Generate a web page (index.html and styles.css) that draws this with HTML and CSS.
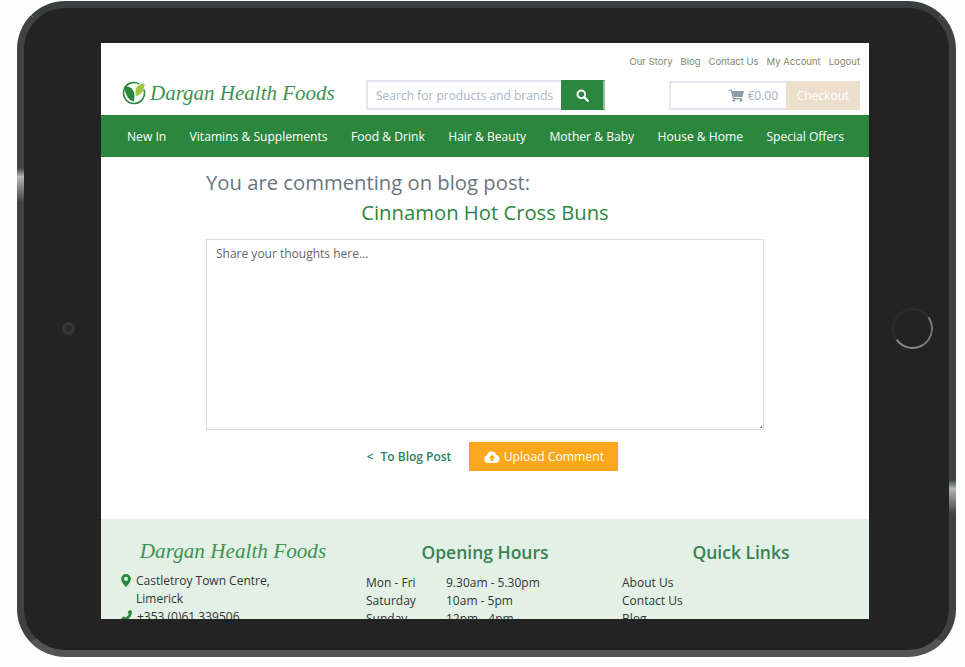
FILE: index.html
```html
<!DOCTYPE html>
<html lang="en">
<head>
  <meta charset="UTF-8">
  <meta name="viewport" content="width=device-width, initial-scale=1.0">
  <title>Dargan Health Foods</title>
  <link rel="stylesheet" href="styles.css">
</head>
<body>

  <div class="tablet">
    <span class="side-glint side-glint-left"></span>
    <span class="side-glint side-glint-right"></span>
    <span class="camera"></span>
    <span class="home-button"></span>

    <div class="screen">
      <header class="site-header">
        <nav class="top-links">
          <a>Our Story</a>
          <a>Blog</a>
          <a>Contact Us</a>
          <a>My Account</a>
          <a>Logout</a>
        </nav>
        <div class="header-row">
          <div class="logo">
            <svg class="logo-icon" viewBox="0 0 24 24" width="24" height="24">
              <path d="M17.250 2.900A10.500 10.500 0 1 0 21.870 8.400" fill="none" stroke="#2b873d" stroke-width="1.600"/>
              <path d="M2.500 5c6 0 10 3.500 10 10 0 2-.3 4-.5 5.500C6 19.500 2.500 12 2.500 5z" fill="#2b873d"/>
              <path d="M22.500 2.500c-5 .5-9.500 2.500-9 9.500 0 1 .2 2 .5 3 5.500-1 8.500-6.500 8.500-12.500z" fill="#9cc63c"/>
            </svg>
            <span class="logo-text">Dargan Health Foods</span>
          </div>
          <form class="search">
            <input class="search-input" type="text" placeholder="Search for products and brands">
            <button class="search-button" type="button">
              <svg viewBox="0 0 16 16" width="13" height="13">
                <circle cx="6.500" cy="6.500" r="4.700" fill="none" stroke="#fff" stroke-width="2.400"/>
                <path d="M10 10l4.500 4.500" stroke="#fff" stroke-width="2.800" stroke-linecap="round"/>
              </svg>
            </button>
          </form>
          <div class="cart">
            <div class="cart-total">
              <svg viewBox="0 0 16 14" width="15" height="13">
                <path d="M0 .5h2.800l.5 1.700H16l-1.500 6.300H5.200l.3 1.200h8.700v1.300H4.300L1.900 1.800H0z" fill="#8d9db0"/>
                <circle cx="5.400" cy="12.400" r="1.400" fill="#8d9db0"/>
                <circle cx="12.800" cy="12.400" r="1.400" fill="#8d9db0"/>
              </svg>
              <span>€0.00</span>
            </div>
            <a class="checkout">Checkout</a>
          </div>
        </div>
      </header>

      <nav class="main-nav">
        <a>New In</a>
        <a>Vitamins &amp; Supplements</a>
        <a>Food &amp; Drink</a>
        <a>Hair &amp; Beauty</a>
        <a>Mother &amp; Baby</a>
        <a>House &amp; Home</a>
        <a>Special Offers</a>
      </nav>

      <main class="comment-page">
        <h2 class="comment-lead">You are commenting on blog post:</h2>
        <h2 class="comment-post">Cinnamon Hot Cross Buns</h2>
        <div class="comment-field">
          <textarea class="comment-box" placeholder="Share your thoughts here..."></textarea>
          <span class="comment-grip"></span>
        </div>
        <div class="comment-actions">
          <a class="back-link"><span class="back-arrow">&lt;</span>To Blog Post</a>
          <button class="upload-button" type="button">
            <svg viewBox="0 0 20 15" width="16" height="12">
              <path d="M5 15a5 5 0 0 1-1.200-9.800A6 6 0 0 1 15.200 4.600 5.300 5.300 0 0 1 15 15z" fill="#fff"/>
              <path d="M10 4.500l4 4.500h-2.500v3.500h-3V9H6z" fill="#fba71b"/>
            </svg>
            Upload Comment
          </button>
        </div>
      </main>

      <footer class="site-footer">
        <div class="footer-col">
          <h3 class="footer-logo">Dargan Health Foods</h3>
          <div class="contact-line">
            <svg class="contact-icon" viewBox="0 0 12 16" width="10" height="13">
              <path fill-rule="evenodd" d="M6 0a6 6 0 0 1 6 6c0 3-3.500 7.500-6 10C3.500 13.500 0 9 0 6a6 6 0 0 1 6-6zm0 3.500a2.500 2.500 0 1 0 0 5 2.500 2.500 0 0 0 0-5z" fill="#2b873d"/>
            </svg>
            <span>Castletroy Town Centre,<br>Limerick</span>
          </div>
          <div class="contact-line">
            <svg class="contact-icon" viewBox="0 0 14 14" width="11" height="11">
              <path d="M3 0l2.500 3-1.500 2c.8 2 2.500 3.700 4.500 4.500l2-1.500 3 2.500-1.500 3C5 14 0 8 0 1.500z" fill="#2b873d" transform="matrix(-1 0 0 1 14 0)"/>
            </svg>
            <span>+353 (0)61 339506</span>
          </div>
        </div>
        <div class="footer-col">
          <h3 class="footer-title">Opening Hours</h3>
          <div class="hours">
            <span>Mon - Fri</span><span>9.30am - 5.30pm</span>
            <span>Saturday</span><span>10am - 5pm</span>
            <span>Sunday</span><span>12pm - 4pm</span>
          </div>
        </div>
        <div class="footer-col">
          <h3 class="footer-title">Quick Links</h3>
          <div class="quick-links">
            <a>About Us</a>
            <a>Contact Us</a>
            <a>Blog</a>
          </div>
        </div>
      </footer>
    </div>
  </div>

</body>
</html>
```

FILE: styles.css
```css
html {
  font-size: 10px;
}

body {
  margin: 0;
  padding: 1px 0 0 17px;
  background-color: #fdfdfd;
  font-family: "Open Sans", Arial, sans-serif;
  overflow: hidden;
}

a {
  text-decoration: none;
}

/* tablet frame */
.tablet {
  position: relative;
  box-sizing: border-box;
  width: 939px;
  height: 656px;
  padding: 35px 80px 31px 77px;
  background-color: #232323;
  border: 7px solid #404242;
  border-top-color: #3a3e3e;
  border-bottom-color: #545454;
  border-radius: 48px;
}

.side-glint {
  position: absolute;
  width: 7px;
  background: linear-gradient(#3a4543, #b5b5b5 25%, #404242);
}

.side-glint-left {
  left: -7px;
  top: 160px;
  height: 34px;
}

.side-glint-right {
  right: -7px;
  top: 472px;
  height: 34px;
}

.camera {
  position: absolute;
  left: 38px;
  top: 314px;
  width: 13px;
  height: 13px;
  box-sizing: border-box;
  border: 3px solid #38383c;
  border-radius: 50%;
  background-color: #2a2a30;
}

.home-button {
  position: absolute;
  left: 868px;
  top: 300px;
  width: 41px;
  height: 41px;
  box-sizing: border-box;
  border: 2px solid #2b2b2b;
  border-right-color: #777;
  border-bottom-color: #888;
  border-radius: 50%;
  transform: rotate(10deg);
}

.screen {
  display: flex;
  flex-direction: column;
  width: 768px;
  height: 576px;
  background-color: #fff;
  overflow: hidden;
}

/* header */
.site-header {
  height: 72px;
  flex: none;
}

.top-links {
  display: flex;
  justify-content: flex-end;
  gap: 8px;
  padding: 12px 9px 0 0;
  height: 13px;
  font-family: Inter, Arial, sans-serif;
  font-size: 9.5px;
  line-height: 13px;
  color: #7c8a68;
}

.header-row {
  display: flex;
  align-items: flex-start;
  margin-top: 12px;
}

.logo {
  display: flex;
  align-items: center;
  gap: 4px;
  width: 244px;
  padding-left: 21px;
  box-sizing: border-box;
}

.logo-icon {
  flex: none;
}

.logo-text {
  font-family: "Liberation Serif", serif;
  font-style: italic;
  font-size: 21px;
  line-height: 26px;
  color: #3f9350;
  white-space: nowrap;
}

.search {
  display: flex;
  margin: 0 0 0 21px;
  height: 30px;
}

.search-input {
  box-sizing: border-box;
  width: 195px;
  height: 30px;
  padding: 0 4px 0 8px;
  border: 2px solid #e4e8ee;
  border-right: none;
  font-family: inherit;
  font-size: 12px;
  outline: none;
}

.search-input::placeholder {
  color: #a9b4c4;
  opacity: 1;
}

.search-button {
  display: flex;
  align-items: center;
  justify-content: center;
  width: 44px;
  height: 30px;
  padding: 0;
  background-color: #2b873d;
  border: 1px solid #2b873d;
  border-right: 2px solid #94c39e;
}

.cart {
  display: flex;
  height: 29px;
  margin: 1px 0 0 64px;
}

.cart-total {
  display: flex;
  align-items: center;
  justify-content: flex-end;
  box-sizing: border-box;
  width: 117px;
  padding-right: 8px;
  border: 2px solid #e4e8ee;
  border-right: none;
  font-size: 12px;
  color: #a3afbe;
}

.cart-total span {
  margin-left: 3px;
}

.checkout {
  width: 74px;
  background-color: #ecdfcd;
  color: #fff;
  font-size: 12px;
  line-height: 29px;
  text-align: center;
}

/* green nav */
.main-nav {
  display: flex;
  flex: none;
  justify-content: space-between;
  box-sizing: border-box;
  height: 42px;
  padding: 1px 25px 0 26px;
  background-color: #2b873d;
  font-size: 12.1px;
  line-height: 41px;
  color: #fff;
}

/* comment form */
.comment-page {
  display: flex;
  flex: none;
  flex-direction: column;
  box-sizing: border-box;
  height: 362px;
  padding: 10px 105px 0;
}

.comment-lead,
.comment-post {
  margin: 0;
  font-weight: 400;
  font-size: 20.25px;
  line-height: 30px;
}

.comment-lead {
  color: #6c757d;
}

.comment-post {
  color: #2b873d;
  text-align: center;
}

.comment-field {
  position: relative;
  margin-top: 12px;
}

.comment-box {
  display: block;
  box-sizing: border-box;
  width: 558px;
  height: 191px;
  margin: 0;
  padding: 6px 9px;
  border: 1px solid #dcdcdc;
  font-family: inherit;
  font-size: 12px;
  line-height: 16px;
  outline: none;
  resize: none;
}

.comment-box::placeholder {
  color: #666;
  opacity: 1;
}

.comment-grip {
  position: absolute;
  right: 2px;
  bottom: 2px;
  width: 3px;
  height: 3px;
  background: linear-gradient(135deg, transparent 50%, #888 50%);
}

.comment-actions {
  display: flex;
  align-items: center;
  justify-content: center;
  gap: 18px;
  margin: 12px 0 0 15px;
}

.back-link {
  font-size: 12px;
  font-weight: 600;
  color: #2c7f63;
}

.back-arrow {
  margin-right: 7px;
}

.upload-button {
  display: flex;
  align-items: center;
  justify-content: center;
  gap: 4px;
  width: 149px;
  height: 29px;
  padding: 0;
  background-color: #fba71b;
  border: none;
  color: #fff;
  font-family: inherit;
  font-size: 12.2px;
}

/* footer */
.site-footer {
  display: grid;
  flex: none;
  grid-template-columns: repeat(3, 256px);
  height: 200px;
  background-color: #e3f0e6;
  font-size: 12px;
  line-height: 18px;
  color: #333;
}

.footer-col {
  box-sizing: border-box;
  padding: 19px 9px 0;
}

.footer-logo {
  margin: 0 0 8px;
  padding-left: 8px;
  font-family: "Liberation Serif", serif;
  font-style: italic;
  font-weight: 400;
  font-size: 21.2px;
  line-height: 26px;
  color: #3f9350;
  text-align: center;
}

.footer-title {
  margin: 0 0 8px;
  font-size: 17.5px;
  font-weight: 600;
  line-height: 28px;
  color: #3b8150;
  text-align: center;
}

.contact-line {
  display: flex;
  gap: 5px;
  padding-left: 11px;
}

.contact-icon {
  flex: none;
  margin-top: 2px;
}

.hours {
  display: grid;
  grid-template-columns: 80px 1fr;
}

.quick-links {
  display: flex;
  flex-direction: column;
  color: #333;
}
```
